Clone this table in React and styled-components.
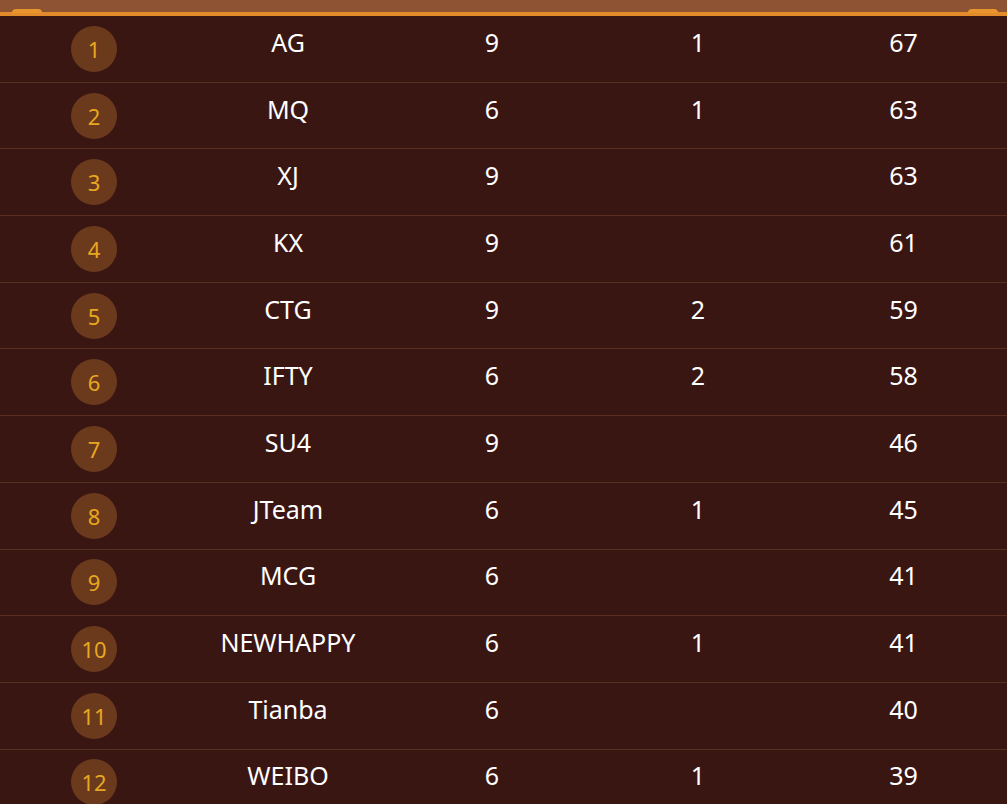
import React from 'react';
import styled, { createGlobalStyle } from 'styled-components';

const GlobalStyle = createGlobalStyle`
  html, body {
    margin: 0;
    padding: 0;
    background: #3a1613;
  }
  body {
    font-family: "Noto Sans", "Open Sans", sans-serif;
  }
`;

const StyledWrapper = styled.div`
  width: 1007px;
  height: 804px;
  overflow: hidden;
  background: #3a1613;
`;

const StyledHeader = styled.div`
  position: relative;
  height: 12px;
  background: #8e5332;
  border-bottom: 4.5px solid #e38a2a;
`;

const StyledTab = styled.span`
  position: absolute;
  bottom: -1px;
  ${({ side }) => (side === 'left' ? 'left: 12px;' : 'right: 9px;')}
  width: 30px;
  height: 4px;
  background: #e9952e;
  border-radius: 4px 4px 0 0;
`;

const StyledRow = styled.div`
  display: grid;
  grid-template-columns: 188px 200px 208px 204px 1fr;
  align-items: center;
  height: 66.7px;
  box-sizing: border-box;
  border-bottom: 1px solid #5a2f22;
`;

const StyledCell = styled.div`
  text-align: center;
  color: #ffffff;
  font-size: 25px;
  line-height: 30px;
  padding-bottom: 14px;
`;

const StyledRankCell = styled.div`
  display: flex;
  justify-content: center;
`;

const StyledRank = styled.span`
  display: flex;
  align-items: center;
  justify-content: center;
  width: 46px;
  height: 46px;
  border-radius: 50%;
  background: #6b3a1d;
  color: #e8a71f;
  font-size: 22px;
  line-height: 1;
`;

const teams = [
  { name: 'AG', a: 9, b: 1, pts: 67 },
  { name: 'MQ', a: 6, b: 1, pts: 63 },
  { name: 'XJ', a: 9, b: '', pts: 63 },
  { name: 'KX', a: 9, b: '', pts: 61 },
  { name: 'CTG', a: 9, b: 2, pts: 59 },
  { name: 'IFTY', a: 6, b: 2, pts: 58 },
  { name: 'SU4', a: 9, b: '', pts: 46 },
  { name: 'JTeam', a: 6, b: 1, pts: 45 },
  { name: 'MCG', a: 6, b: '', pts: 41 },
  { name: 'NEWHAPPY', a: 6, b: 1, pts: 41 },
  { name: 'Tianba', a: 6, b: '', pts: 40 },
  { name: 'WEIBO', a: 6, b: 1, pts: 39 },
];

const App = () => (
  <>
    <GlobalStyle />
    <StyledWrapper>
      <StyledHeader>
        <StyledTab side="left" />
        <StyledTab side="right" />
      </StyledHeader>
      {teams.map((team, i) => (
        <StyledRow key={team.name}>
          <StyledRankCell>
            <StyledRank>{i + 1}</StyledRank>
          </StyledRankCell>
          <StyledCell>{team.name}</StyledCell>
          <StyledCell>{team.a}</StyledCell>
          <StyledCell>{team.b}</StyledCell>
          <StyledCell>{team.pts}</StyledCell>
        </StyledRow>
      ))}
    </StyledWrapper>
  </>
);

export default App;
